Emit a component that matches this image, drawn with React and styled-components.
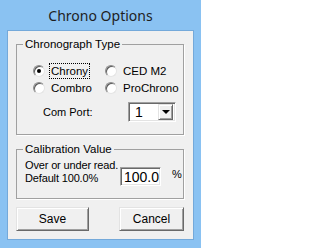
import React from 'react'
import styled, { createGlobalStyle, css } from 'styled-components'

const GlobalStyle = createGlobalStyle`
    html, body {
        margin: 0;
        padding: 0;
    }
    body {
        width: 201px;
        height: 248px;
        overflow: hidden;
        font-family: "Liberation Sans", Arial, sans-serif;
        font-size: 11px;
        color: #000;
    }
`

const Window = styled.div`
    display: flex;
    flex-direction: column;
    box-sizing: border-box;
    width: 201px;
    height: 248px;
    padding: 0 7px 8px 7px;
    background: #8ac2f2;
`

const TitleBar = styled.div`
    display: flex;
    align-items: center;
    justify-content: center;
    height: 30px;
    font-family: "Noto Sans", "Open Sans", sans-serif;
    font-size: 14px;
    color: #1e1e1e;
`

const Client = styled.div`
    display: flex;
    flex-direction: column;
    flex: 1;
    background: #f0f0f0;
    border: 1px solid #74a9da;
    padding: 7px 9px 0 8px;
`

const Group = styled.fieldset`
    box-sizing: border-box;
    margin: 0;
    padding: 0;
    height: ${props => props.h}px;
    border: 1px solid #a0a0a0;
    box-shadow: 1px 1px 0 #fff;
    & + & {
        margin-top: 8px;
    }
`

const Legend = styled.legend`
    margin-left: 6px;
    padding: 0 2px;
    line-height: 13px;
    font-size: 11.5px;
`

const RadioGrid = styled.div`
    display: grid;
    grid-template-columns: 72px auto;
    grid-auto-rows: 17px;
    padding: 11px 0 0 16px;
    font-size: 11.5px;
`

const RadioItem = styled.label`
    display: flex;
    align-items: center;
`

const Dot = styled.span`
    position: relative;
    box-sizing: border-box;
    width: 12px;
    height: 12px;
    margin-right: 5px;
    border-radius: 50%;
    background: #fff;
    border: 1px solid;
    border-color: #8c8c8c #e4e4e4 #e4e4e4 #8c8c8c;
    box-shadow: inset 1px 1px 0 #5a5a5a;
    ${props => props.checked && css`
        &::after {
            content: '';
            position: absolute;
            left: 3px;
            top: 3px;
            width: 4px;
            height: 4px;
            border-radius: 50%;
            background: #000;
        }
    `}
`

const RadioText = styled.span`
    line-height: 14px;
    padding: 0 1px;
    border: 1px dotted ${props => props.focused ? '#000' : 'transparent'};
    margin-left: -1px;
`

const PortRow = styled.div`
    display: flex;
    align-items: center;
    justify-content: space-between;
    margin-top: 6px;
    padding: 0 7px 0 26px;
`

const Sunken = styled.div`
    box-sizing: border-box;
    display: flex;
    align-items: center;
    background: #fff;
    border: 1px solid;
    border-color: #a0a0a0 #fff #fff #a0a0a0;
    box-shadow: inset 1px 1px 0 #696969, inset -1px -1px 0 #e3e3e3;
    font-size: 14px;
`

const Combo = styled(Sunken)`
    width: 48px;
    height: 20px;
    padding: 2px;
    justify-content: space-between;
    & > span {
        padding-left: 4px;
    }
`

const ArrowButton = styled.div`
    box-sizing: border-box;
    display: flex;
    align-items: center;
    justify-content: center;
    width: 15px;
    height: 16px;
    background: #f0f0f0;
    border: 1px solid;
    border-color: #e3e3e3 #696969 #696969 #e3e3e3;
    box-shadow: inset 1px 1px 0 #fff, inset -1px -1px 0 #a0a0a0;
    &::after {
        content: '';
        border-left: 4px solid transparent;
        border-right: 4px solid transparent;
        border-top: 4px solid #000;
    }
`

const CalibRow = styled.div`
    display: flex;
    align-items: flex-start;
    padding: 3px 0 0 8px;
`

const CalibText = styled.div`
    width: 95px;
    line-height: 13px;
    white-space: nowrap;
    letter-spacing: -0.15px;
`

const Edit = styled(Sunken)`
    width: 41px;
    height: 19px;
    margin-top: 8px;
    padding-left: 3px;
`

const Percent = styled.span`
    margin: 9px 0 0 11px;
    font-size: 11px;
`

const Buttons = styled.div`
    display: flex;
    justify-content: space-between;
    margin-top: 8px;
`

const Button = styled.button`
    box-sizing: border-box;
    width: ${props => props.w}px;
    height: 24px;
    padding: 0;
    font: inherit;
    font-size: 12px;
    color: #000;
    background: #f0f0f0;
    border: 1px solid;
    border-color: #e3e3e3 #696969 #696969 #e3e3e3;
    box-shadow: inset 1px 1px 0 #fff, inset -1px -1px 0 #a0a0a0;
`

const radios = [
    { text: 'Chrony', checked: true },
    { text: 'CED M2' },
    { text: 'Combro' },
    { text: 'ProChrono' }
]

export default function App() {
    return (
        <Window>
            <GlobalStyle />
            <TitleBar>Chrono Options</TitleBar>
            <Client>
                <Group h={97}>
                    <Legend>Chronograph Type</Legend>
                    <RadioGrid>
                        {radios.map((r, k) =>
                            <RadioItem key={k}>
                                <Dot checked={r.checked} />
                                <RadioText focused={r.checked}>{r.text}</RadioText>
                            </RadioItem>
                        )}
                    </RadioGrid>
                    <PortRow>
                        <span>Com Port:</span>
                        <Combo>
                            <span>1</span>
                            <ArrowButton />
                        </Combo>
                    </PortRow>
                </Group>
                <Group h={56}>
                    <Legend>Calibration Value</Legend>
                    <CalibRow>
                        <CalibText>
                            Over or under read.<br />
                            Default 100.0%
                        </CalibText>
                        <Edit>100.0</Edit>
                        <Percent>%</Percent>
                    </CalibRow>
                </Group>
                <Buttons>
                    <Button w={73}>Save</Button>
                    <Button w={65}>Cancel</Button>
                </Buttons>
            </Client>
        </Window>
    )
}
